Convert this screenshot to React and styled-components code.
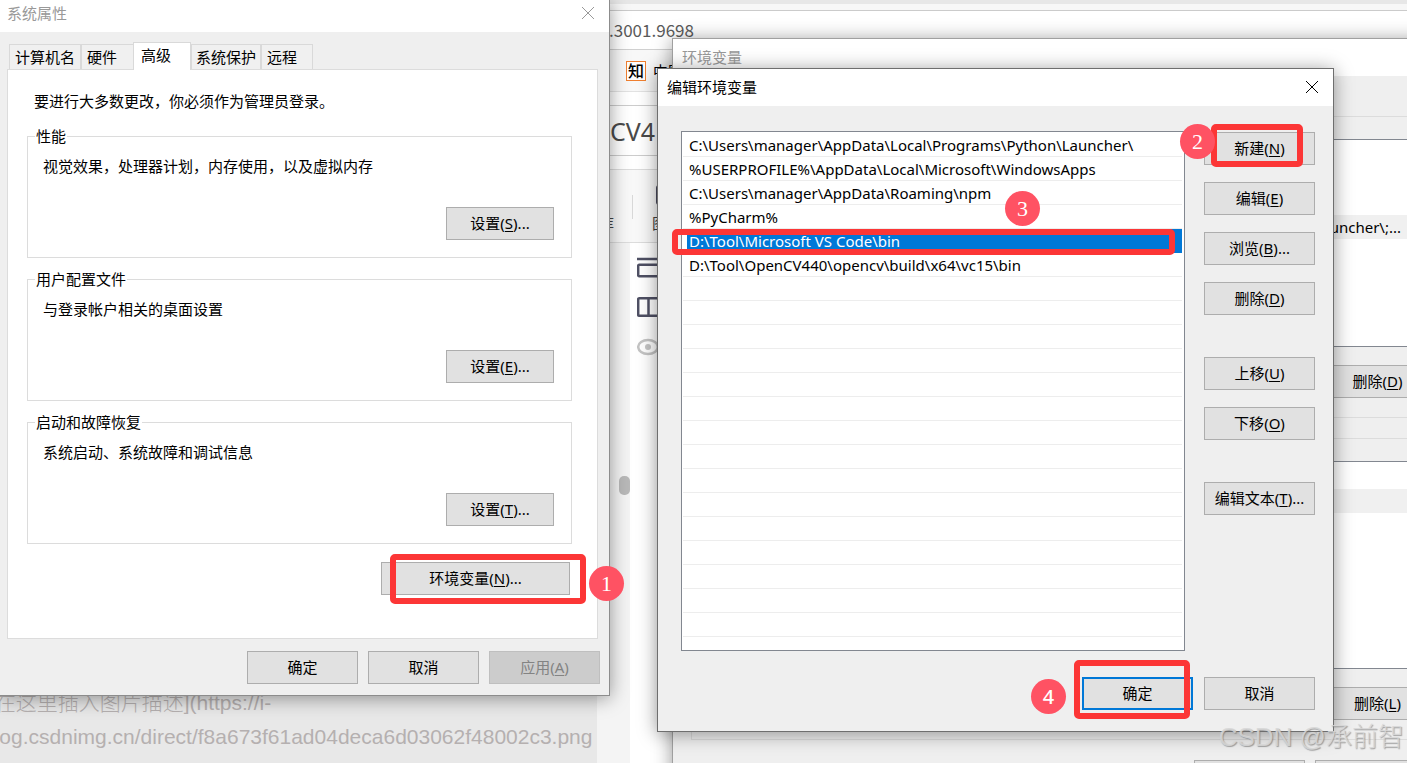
import { useState } from 'react';
import styled, { createGlobalStyle } from 'styled-components';

const PATHS = [
  'C:\\Users\\manager\\AppData\\Local\\Programs\\Python\\Launcher\\',
  '%USERPROFILE%\\AppData\\Local\\Microsoft\\WindowsApps',
  'C:\\Users\\manager\\AppData\\Roaming\\npm',
  '%PyCharm%',
  'D:\\Tool\\Microsoft VS Code\\bin',
  'D:\\Tool\\OpenCV440\\opencv\\build\\x64\\vc15\\bin',
];
const ROW_COUNT = 21;
const MARKED_ROW = 4;

const TABS = ['计算机名', '硬件', '高级', '系统保护', '远程'];

const GROUPS = [
  { title: '性能', text: '视觉效果，处理器计划，内存使用，以及虚拟内存', hotkey: 'S' },
  { title: '用户配置文件', text: '与登录帐户相关的桌面设置', hotkey: 'E' },
  { title: '启动和故障恢复', text: '系统启动、系统故障和调试信息', hotkey: 'T' },
];

const Hot = ({ label, k, more }) => (
  <>
    {label}(<u>{k}</u>){more && '...'}
  </>
);

const CloseIcon = () => (
  <svg width="14" height="14" viewBox="0 0 14 14" fill="none" stroke="currentColor">
    <path d="M1 1L13 13M13 1L1 13" />
  </svg>
);

const BrowserPage = () => {
  return (
    <Page>
      <TabStrip />
      <AddressBar>.3001.9698</AddressBar>
      <Bookmarks>
        <Favicon>知</Favicon>
        中国
      </Bookmarks>
      <TitleBox>CV4</TitleBox>
      <Toolbar>
        <span>库</span>
        <Divider />
        <ToolItem>
          <svg width="24" height="20" viewBox="0 0 24 20">
            <rect width="24" height="20" rx="3" fill="#4a4a5e" />
          </svg>
          图
        </ToolItem>
      </Toolbar>
      <Editor>
        <Source>
          <Markdown>
            ![在这里插入图片描述](https://i-
            <br />
            blog.csdnimg.cn/direct/f8a673f61ad04deca6d03062f48002c3.png
            <br />
            &nbsp;&nbsp;&nbsp;300
          </Markdown>
          <Thumb />
        </Source>
        <SideIcons>
          <svg width="24" height="22" viewBox="0 0 24 22" fill="none" stroke="#4f5064" strokeWidth="2.5">
            <path d="M0 3H24" />
            <rect x="1.2" y="8.8" width="24" height="11.4" rx="1" />
          </svg>
          <svg width="24" height="22" viewBox="0 0 24 22" fill="none" stroke="#4f5064" strokeWidth="2.5">
            <rect x="1.2" y="2.2" width="22" height="17.6" rx="1" />
            <path d="M11.5 2V20" />
          </svg>
          <svg width="24" height="22" viewBox="0 0 24 22" fill="none" stroke="#c4c4c4" strokeWidth="2.5">
            <ellipse cx="11" cy="11" rx="9.8" ry="7" />
            <circle cx="11" cy="11" r="3" fill="#c4c4c4" stroke="none" />
          </svg>
        </SideIcons>
      </Editor>
    </Page>
  );
};

const SystemProperties = () => {
  const [tab, setTab] = useState('高级');
  return (
    <SystemWindow>
      <TitleBar $muted $height={32}>
        系统属性
        <CloseButton aria-label="关闭">
          <CloseIcon />
        </CloseButton>
      </TitleBar>
      <SystemBody>
        <Tabs role="tablist">
          {TABS.map((name) => (
            <Tab key={name} role="tab" aria-selected={tab === name} $active={tab === name} onClick={() => setTab(name)}>
              {name}
            </Tab>
          ))}
        </Tabs>
        <Panel>
          <Notice>要进行大多数更改，你必须作为管理员登录。</Notice>
          {GROUPS.map((group) => (
            <Group key={group.title}>
              <legend>{group.title}</legend>
              <p>{group.text}</p>
              <Button $width={108}>
                <Hot label="设置" k={group.hotkey} more />
              </Button>
            </Group>
          ))}
          <PanelFooter>
            <Anchor>
              <Button $width={189}>
                <Hot label="环境变量" k="N" more />
              </Button>
              <Frame $inset="-8px -16px -9px 9px" />
              <Badge $top={4} $left={208}>
                1
              </Badge>
            </Anchor>
          </PanelFooter>
        </Panel>
        <Actions>
          <Button>确定</Button>
          <Button>取消</Button>
          <Button disabled>
            <Hot label="应用" k="A" />
          </Button>
        </Actions>
      </SystemBody>
    </SystemWindow>
  );
};

const VariableList = ({ rows, hotkey }) => (
  <VariableGroup>
    <VariableTable>
      <tbody>
        <tr />
        {rows.map((row, i) => (
          <VariableRow key={i} $shaded={i === rows.length - 1}>
            <td>{row}</td>
          </VariableRow>
        ))}
      </tbody>
    </VariableTable>
    <Button>
      <Hot label="删除" k={hotkey} />
    </Button>
  </VariableGroup>
);

const Variables = () => {
  return (
    <VariablesWindow>
      <TitleBar $muted $height={37}>
        环境变量
      </TitleBar>
      <VariablesBody>
        <VariableList rows={['', '', 'Launcher\\;...']} hotkey="D" />
        <VariableList rows={['']} hotkey="L" />
        <VariablesActions>
          <Button aria-label="确定" />
          <Button aria-label="取消" />
        </VariablesActions>
      </VariablesBody>
    </VariablesWindow>
  );
};

const EditVariable = () => {
  const [selected, setSelected] = useState(MARKED_ROW);
  return (
    <EditWindow>
      <TitleBar $height={37}>
        编辑环境变量
        <CloseButton aria-label="关闭">
          <CloseIcon />
        </CloseButton>
      </TitleBar>
      <EditBody>
        <PathList role="listbox" aria-label="编辑环境变量">
          {Array.from({ length: ROW_COUNT }, (_, i) => (
            <PathRow key={i} role="option" aria-selected={i === selected} onClick={() => PATHS[i] && setSelected(i)}>
              <PathText $selected={i === selected}>{PATHS[i]}</PathText>
              {i === MARKED_ROW && (
                <>
                  <Frame $inset="0 7px -3px -11px" />
                  <Badge $top={-38} $left={322}>
                    3
                  </Badge>
                </>
              )}
            </PathRow>
          ))}
        </PathList>
        <SideButtons>
          <Anchor>
            <Button>
              <Hot label="新建" k="N" />
            </Button>
            <Frame $inset="-8px 12px -2px 7px" />
            <Badge $top={-8} $left={-24}>
              2
            </Badge>
          </Anchor>
          <Button>
            <Hot label="编辑" k="E" />
          </Button>
          <Button>
            <Hot label="浏览" k="B" more />
          </Button>
          <Button>
            <Hot label="删除" k="D" />
          </Button>
          <Button $gap>
            <Hot label="上移" k="U" />
          </Button>
          <Button>
            <Hot label="下移" k="O" />
          </Button>
          <Button $gap>
            <Hot label="编辑文本" k="T" more />
          </Button>
        </SideButtons>
      </EditBody>
      <EditActions>
        <Anchor>
          <Button $primary>确定</Button>
          <Frame $inset="-17px 3px -9px -8px" />
          <Badge $top={2} $left={-51} $sans>
            4
          </Badge>
        </Anchor>
        <Button>取消</Button>
      </EditActions>
    </EditWindow>
  );
};

const App = () => {
  return (
    <Desktop>
      <GlobalStyle />
      <BrowserPage />
      <Variables />
      <EditVariable />
      <SystemProperties />
      <Watermark>CSDN @承前智</Watermark>
    </Desktop>
  );
};

export default App;

const GlobalStyle = createGlobalStyle`
  * {
    box-sizing: border-box;
  }
  body {
    margin: 0;
    font-family: 'Noto Sans', 'Noto Sans CJK SC', sans-serif;
    font-size: 15px;
    line-height: 20px;
    color: #000;
  }
  button {
    font: inherit;
    color: inherit;
  }
`;

const Desktop = styled.div`
  position: relative;
  height: 100vh;
  overflow: hidden;
  background: #fff;
`;

/* browser behind the dialogs */

const Page = styled.div`
  display: flex;
  flex-direction: column;
  height: 100%;
`;

const TabStrip = styled.div`
  height: 11px;
  background: #f7f7f7;
  border-top: 4px solid #e7e7e7;
  border-bottom: 1px solid #cbcbcb;
`;

const AddressBar = styled.div`
  height: 39px;
  padding: 9px 0 0 609px;
  border-bottom: 1px solid #d0d0d0;
  font-family: 'Noto Sans CJK SC', sans-serif;
  font-size: 17px;
  color: #5a5a5a;
`;

const Bookmarks = styled.div`
  display: flex;
  align-items: center;
  gap: 7px;
  height: 42px;
  padding: 1px 0 0 626px;
  background: #f8f8f8;
  border-bottom: 1px solid #e2e2e2;
`;

const Favicon = styled.span`
  width: 20px;
  height: 20px;
  border: 1px solid #f08030;
  background: #fff;
  font-size: 16px;
  font-weight: 500;
  line-height: 18px;
  text-align: center;
`;

const TitleBox = styled.div`
  height: 51px;
  margin: 13px 0;
  padding: 0 0 0 610px;
  border: solid #ccc;
  border-width: 1px 0;
  font-size: 25px;
  line-height: 50px;
  color: #4a4a4a;
`;

const Toolbar = styled.div`
  display: flex;
  align-items: flex-end;
  height: 74px;
  padding: 0 0 9px 599px;
  border: solid #dcdcdc;
  border-width: 1px 0;
  background: #f8f8f8;
  color: #444;
`;

const Divider = styled.span`
  width: 1px;
  height: 24px;
  margin: 0 19px 14px 18px;
  background: #d8d8d8;
`;

const ToolItem = styled.span`
  display: flex;
  flex-direction: column;
  gap: 8px;

  svg {
    margin-left: 4px;
  }
`;

const Editor = styled.div`
  display: flex;
  flex: 1;
  min-height: 0;
`;

const Source = styled.div`
  position: relative;
  display: flex;
  width: 630px;
  padding-right: 33px;
  background: #f4f4f4;
`;

const Markdown = styled.div`
  display: flow-root;
  flex: 1;
  height: 100%;
  padding-top: 443px;
  margin-left: -17px;
  background: #e8e8e8;
  font-family: 'Liberation Sans', 'Noto Sans CJK SC', sans-serif;
  font-size: 21px;
  font-weight: 300;
  line-height: 34px;
  white-space: nowrap;
  color: #b5b0b0;
`;

const Thumb = styled.span`
  position: absolute;
  top: 233px;
  right: 0;
  width: 11px;
  height: 19px;
  border-radius: 5px;
  background: #b9b9b9;
`;

const SideIcons = styled.div`
  display: flex;
  flex-direction: column;
  gap: 18px;
  padding: 13px 7px;
`;

/* shared dialog parts */

const Dialog = styled.section`
  position: absolute;
  display: flex;
  flex-direction: column;
  background: #efefef;
  border: 1px solid #6e6e6e;
  box-shadow: 0 2px 18px rgba(0, 0, 0, 0.4);
`;

const TitleBar = styled.header`
  display: flex;
  align-items: center;
  justify-content: space-between;
  height: ${(props) => props.$height}px;
  padding: 0 14px 2px 9px;
  background: #fff;
  color: ${(props) => (props.$muted ? '#999' : '#000')};
`;

const CloseButton = styled.button`
  display: flex;
  padding: 0;
  border: 0;
  background: none;
`;

const Button = styled.button`
  flex-shrink: 0;
  width: ${(props) => props.$width || 111}px;
  height: 33px;
  margin-top: ${(props) => (props.$gap ? 25 : 0)}px;
  padding: 0 0 2px;
  border: ${(props) => (props.$primary ? '2px solid #0078d7' : '1px solid #adadad')};
  background: #e1e1e1;

  u {
    text-underline-offset: 2px;
  }

  &:disabled {
    border-color: #bfbfbf;
    background: #ccc;
    color: #838383;
  }
`;

const Anchor = styled.div`
  position: relative;
  display: flex;
`;

const Frame = styled.span`
  position: absolute;
  inset: ${(props) => props.$inset};
  border: 6px solid #fc3636;
  border-radius: 5px;
  pointer-events: none;
`;

const Badge = styled.span`
  position: absolute;
  z-index: 1;
  top: ${(props) => props.$top}px;
  left: ${(props) => props.$left}px;
  width: 35px;
  height: 35px;
  border-radius: 50%;
  background: #ff5263;
  color: #fff;
  font-family: ${(props) => (props.$sans ? "'Noto Sans', sans-serif" : "'Liberation Serif', serif")};
  font-size: ${(props) => (props.$sans ? 20 : 22)}px;
  font-weight: ${(props) => (props.$sans ? 500 : 400)};
  line-height: 35px;
  text-align: center;
`;

/* system properties */

const SystemWindow = styled(Dialog)`
  top: 0;
  left: 0;
  width: 610px;
  border-width: 0 1px 1px 0;
  border-color: #8c8c8c;

  ${TitleBar} {
    padding: 0 14px 6px 7px;
  }
`;

const SystemBody = styled.div`
  padding: 10px 9px 11px 7px;
`;

const Tabs = styled.div`
  display: flex;
  align-items: flex-end;
  padding-left: 2px;
`;

const Tab = styled.button`
  height: ${(props) => (props.$active ? 28 : 25)}px;
  margin: ${(props) => (props.$active ? '0 0 -1px -1px' : '0')};
  padding: ${(props) => (props.$active ? '0 19px 4px 7px' : '0 5px 1px')};
  border: 1px solid #d9d9d9;
  border-bottom: 0;
  background: ${(props) => (props.$active ? '#fff' : '#f0f0f0')};

  & + & {
    border-left-width: ${(props) => (props.$active ? 1 : 0)}px;
  }
  &:nth-child(2) {
    padding-right: 16px;
  }
  &:nth-child(4) {
    padding: 0 4px 1px;
  }
  &:last-child {
    padding-right: 15px;
  }
`;

const Panel = styled.div`
  height: 570px;
  margin-right: 2px;
  padding: 21px 25px 0 19px;
  border: 1px solid #dcdcdc;
  background: #fff;
`;

const Notice = styled.p`
  margin: 0 0 15px 7px;
`;

const Group = styled.fieldset`
  display: flex;
  flex-direction: column;
  align-items: flex-end;
  height: 132px;
  margin: 0 0 11px;
  padding: 0 17px;
  border: 1px solid #dcdcdc;

  legend {
    margin-left: -10px;
    padding: 0 1px;
  }
  p {
    align-self: flex-start;
    margin: 10px 0 31px -2px;
  }
`;

const PanelFooter = styled.div`
  display: flex;
  justify-content: flex-end;
  padding: 7px 2px 0 0;
`;

const Actions = styled.div`
  display: flex;
  justify-content: flex-end;
  gap: 10px;
  padding-top: 12px;
`;

/* environment variables */

const VariablesWindow = styled(Dialog)`
  top: 38px;
  left: 672px;
  width: 793px;
  height: 800px;
  border-color: #a0a0a0;
`;

const VariablesBody = styled.div`
  padding: 40px 18px;
`;

const VariableGroup = styled.div`
  display: flex;
  flex-direction: column;
  align-items: flex-end;
  height: 302px;
  margin-bottom: 20px;
  padding: 22px 12px 0;
  border: 1px solid #dcdcdc;
`;

const VariableTable = styled.table`
  display: block;
  width: 100%;
  height: 208px;
  margin-bottom: 18px;
  padding-top: 27px;
  border: 1px solid #828790;
  background: #fff;

  tbody {
    display: block;
  }
`;

const VariableRow = styled.tr`
  display: block;
  height: 24px;
  padding-right: 31px;
  background: ${(props) => (props.$shaded ? '#f0f0f0' : '#fff')};
  text-align: right;

  td {
    display: block;
    padding: 2px 0;
  }
`;

const VariablesActions = styled.div`
  display: flex;
  justify-content: flex-end;
  gap: 10px;
  padding-right: 20px;
`;

/* edit dialog */

const EditWindow = styled(Dialog)`
  top: 68px;
  left: 657px;
  width: 677px;
`;

const EditBody = styled.div`
  display: flex;
  gap: 19px;
  padding: 25px 18px 26px 23px;
`;

const PathList = styled.ul`
  flex: 1;
  height: 520px;
  margin: 0;
  padding: 1px 2px 0 1px;
  border: 1px solid #828790;
  background: #fff;
  list-style: none;
`;

const PathRow = styled.li`
  position: relative;
  height: 24px;
  padding-left: 4px;
  border-bottom: 1px solid #ededed;
`;

const PathText = styled.div`
  height: 24px;
  padding: 2px 0 0 2px;
  background: ${(props) => (props.$selected ? '#0078d7' : 'transparent')};
  color: ${(props) => (props.$selected ? '#fff' : '#000')};
`;

const SideButtons = styled.div`
  display: flex;
  flex-direction: column;
  gap: 17px;
  padding-top: 1px;
`;

const EditActions = styled.footer`
  display: flex;
  justify-content: flex-end;
  gap: 11px;
  padding: 0 18px 21px;
`;

const Watermark = styled.div`
  position: absolute;
  right: 3px;
  bottom: 8px;
  font-family: 'Liberation Sans', 'Noto Sans CJK SC', sans-serif;
  font-size: 26px;
  font-weight: 300;
  line-height: 36px;
  color: rgba(215, 215, 215, 0.85);
  text-shadow: 1px 1px 1px rgba(110, 110, 110, 0.6);
`;
